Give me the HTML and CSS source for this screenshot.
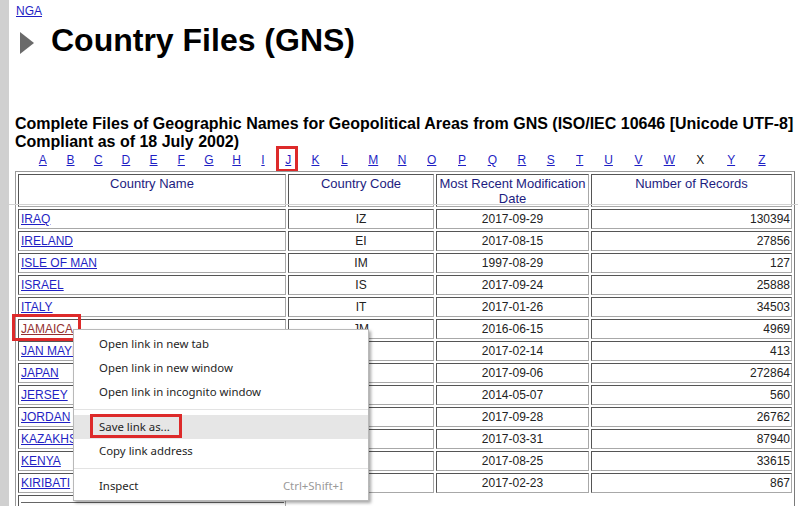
FILE: index.html
```html
<!DOCTYPE html>
<html lang="en">
<head>
<meta charset="utf-8">
<title>Country Files (GNS)</title>
<link rel="stylesheet" href="styles.css">
</head>
<body>
<div class="page">
  <div class="sidebar"></div>
  <main class="main">
    <a class="nga" href="#">NGA</a>
    <h1 class="title"><svg class="title-arrow" width="14" height="22" viewBox="0 0 14 22" aria-hidden="true"><polygon points="0,0 14,11 0,22" fill="#6a6a6a"/></svg><span>Country Files (GNS)</span></h1>
    <h2 class="subtitle">Complete Files of Geographic Names for Geopolitical Areas from GNS (ISO/IEC 10646 [Unicode UTF-8]<br>Compliant as of 18 July 2002)</h2>
    <nav class="alpha">
      <span><a href="#">A</a></span>
      <span><a href="#">B</a></span>
      <span><a href="#">C</a></span>
      <span><a href="#">D</a></span>
      <span><a href="#">E</a></span>
      <span><a href="#">F</a></span>
      <span><a href="#">G</a></span>
      <span><a href="#">H</a></span>
      <span><a href="#">I</a></span>
      <span><a class="marked-j" href="#">J</a></span>
      <span><a href="#">K</a></span>
      <span><a href="#">L</a></span>
      <span><a href="#">M</a></span>
      <span><a href="#">N</a></span>
      <span><a href="#">O</a></span>
      <span><a href="#">P</a></span>
      <span><a href="#">Q</a></span>
      <span><a href="#">R</a></span>
      <span><a href="#">S</a></span>
      <span><a href="#">T</a></span>
      <span><a href="#">U</a></span>
      <span><a href="#">V</a></span>
      <span><a href="#">W</a></span>
      <span class="alpha-current">X</span>
      <span><a href="#">Y</a></span>
      <span><a href="#">Z</a></span>
    </nav>
    <div class="table-wrap">
      <table class="files">
        <colgroup>
          <col class="col-name">
          <col class="col-code">
          <col class="col-date">
          <col class="col-count">
        </colgroup>
        <thead>
          <tr>
            <th>Country Name</th>
            <th>Country Code</th>
            <th>Most Recent Modification Date</th>
            <th>Number of Records</th>
          </tr>
        </thead>
        <tbody>
          <tr><td class="name"><a href="#">IRAQ</a></td><td class="code">IZ</td><td class="date">2017-09-29</td><td class="count">130394</td></tr>
          <tr><td class="name"><a href="#">IRELAND</a></td><td class="code">EI</td><td class="date">2017-08-15</td><td class="count">27856</td></tr>
          <tr><td class="name"><a href="#">ISLE OF MAN</a></td><td class="code">IM</td><td class="date">1997-08-29</td><td class="count">127</td></tr>
          <tr><td class="name"><a href="#">ISRAEL</a></td><td class="code">IS</td><td class="date">2017-09-24</td><td class="count">25888</td></tr>
          <tr><td class="name"><a href="#">ITALY</a></td><td class="code">IT</td><td class="date">2017-01-26</td><td class="count">34503</td></tr>
          <tr><td class="name"><a class="visited marked-link" href="#">JAMAICA</a></td><td class="code">JM</td><td class="date">2016-06-15</td><td class="count">4969</td></tr>
          <tr><td class="name"><a href="#">JAN MAYEN</a></td><td class="code">JN</td><td class="date">2017-02-14</td><td class="count">413</td></tr>
          <tr><td class="name"><a href="#">JAPAN</a></td><td class="code">JA</td><td class="date">2017-09-06</td><td class="count">272864</td></tr>
          <tr><td class="name"><a href="#">JERSEY</a></td><td class="code">JE</td><td class="date">2014-05-07</td><td class="count">560</td></tr>
          <tr><td class="name"><a href="#">JORDAN</a></td><td class="code">JO</td><td class="date">2017-09-28</td><td class="count">26762</td></tr>
          <tr><td class="name"><a href="#">KAZAKHSTAN</a></td><td class="code">KZ</td><td class="date">2017-03-31</td><td class="count">87940</td></tr>
          <tr><td class="name"><a href="#">KENYA</a></td><td class="code">KE</td><td class="date">2017-08-25</td><td class="count">33615</td></tr>
          <tr><td class="name"><a href="#">KIRIBATI</a></td><td class="code">KR</td><td class="date">2017-02-23</td><td class="count">867</td></tr>
          <tr class="tail"><td class="name"><div class="tail-box"></div></td></tr>
        </tbody>
      </table>
    </div>
  </main>
  <div class="context-menu">
    <div class="cm-item">Open link in new tab</div>
    <div class="cm-item">Open link in new window</div>
    <div class="cm-item">Open link in incognito window</div>
    <div class="cm-sep"></div>
    <div class="cm-item cm-hover cm-marked">Save link as...</div>
    <div class="cm-item">Copy link address</div>
    <div class="cm-sep"></div>
    <div class="cm-item"><span>Inspect</span><span class="cm-key">Ctrl+Shift+I</span></div>
  </div>
</div>
</body>
</html>
```
FILE: styles.css
```css
html, body {
  margin: 0;
  padding: 0;
  height: 506px;
  overflow: hidden;
  background: #fff;
}

body {
  font-family: "Liberation Sans", Arial, sans-serif;
  color: #000;
}

a {
  color: #1f1fc4;
  text-decoration: underline;
}

.page {
  position: relative;
  display: flex;
  min-height: 506px;
}

.sidebar {
  width: 9px;
  flex: none;
  background: #d0d0d0;
}

.main {
  flex: 1;
  padding-left: 6px;
  padding-top: 4px;
}

.nga {
  display: block;
  width: max-content;
  margin-left: 1px;
  font-size: 12px;
  line-height: 14px;
}

.title {
  display: flex;
  align-items: flex-start;
  margin: 4px 0 0;
  padding-left: 5px;
  font-size: 32px;
  line-height: 37px;
  font-weight: bold;
}

.title-arrow {
  flex: none;
  margin-top: 10px;
  margin-right: 17px;
}

.subtitle {
  margin: 56px 0 0;
  font-size: 16px;
  line-height: 18px;
  font-weight: bold;
  white-space: nowrap;
}

.alpha {
  display: grid;
  grid-template-columns: repeat(8, 27.7px) 25px 25.5px repeat(4, 28.9px) repeat(3, 30.3px) repeat(4, 28.9px) repeat(5, 30.9px);
  margin-top: 2px;
  padding-left: 14px;
  font-size: 12px;
  line-height: 15px;
  text-align: center;
}

.alpha-current {
  color: #111;
}

.marked-j {
  position: relative;
}

.marked-j::after {
  content: "";
  position: absolute;
  left: -9px;
  top: -7px;
  width: 22px;
  height: 26px;
  border: 3px solid #dd2a2a;
  box-sizing: border-box;
}

.table-wrap {
  position: relative;
  margin-top: 3px;
}

.table-wrap::after {
  content: "";
  position: absolute;
  left: -6px;
  right: -3px;
  top: 33px;
  height: 1px;
  background: #d2d2d2;
}

.files {
  width: 780px;
  table-layout: fixed;
  border-collapse: separate;
  border-spacing: 2px;
  border: 1px solid #9a9a9a;
  border-right-color: #7a7a7a;
  border-bottom-color: #7a7a7a;
}

.col-name { width: 268px; }
.col-code { width: 146px; }
.col-date { width: 153px; }
.col-count { width: 201px; }

.files th,
.files td {
  border: 1px solid;
  border-color: #555 #a8a8a8 #a8a8a8 #555;
}

.files th {
  padding: 2px 1px 0;
  font-size: 13px;
  line-height: 14.5px;
  font-weight: normal;
  color: #1c1c80;
  text-align: center;
  vertical-align: top;
}

.files td {
  padding: 1px;
  font-size: 12px;
  line-height: 16px;
  color: #222;
  white-space: nowrap;
  overflow: hidden;
}

.files td.name {
  text-align: left;
  padding-left: 2px;
  overflow: visible;
}
.files td.code,
.files td.date { text-align: center; }
.files td.count { text-align: right; }

.files td .visited {
  color: #943030;
}

.marked-link {
  position: relative;
}

.marked-link::after {
  content: "";
  position: absolute;
  left: -9px;
  top: -8px;
  width: 69px;
  height: 27px;
  border: 3px solid #dd2a2a;
  box-sizing: border-box;
}

.tail-box {
  margin-top: 5px;
  height: 20px;
  border-top: 1px solid #666;
}

.context-menu {
  position: absolute;
  left: 73px;
  top: 329px;
  width: 296px;
  box-sizing: border-box;
  padding: 2px 0;
  background: #fff;
  border: 1px solid #b9b9b9;
  box-shadow: 2px 2px 3px rgba(0, 0, 0, 0.35);
  font-family: "Noto Sans", "Open Sans", sans-serif;
  font-size: 11.4px;
  color: #1e1e1e;
}

.cm-item {
  position: relative;
  display: flex;
  justify-content: space-between;
  height: 24px;
  line-height: 24px;
  padding: 0 25px;
}

.cm-hover {
  background: #e6e6e6;
}

.cm-marked::after {
  content: "";
  position: absolute;
  left: 16px;
  top: -1px;
  width: 92px;
  height: 24px;
  border: 3px solid #dd2a2a;
  box-sizing: border-box;
}

.cm-key {
  color: #9a9a9a;
}

.cm-sep {
  height: 1px;
  margin: 5px 0;
  background: #e3e3e3;
}
```
